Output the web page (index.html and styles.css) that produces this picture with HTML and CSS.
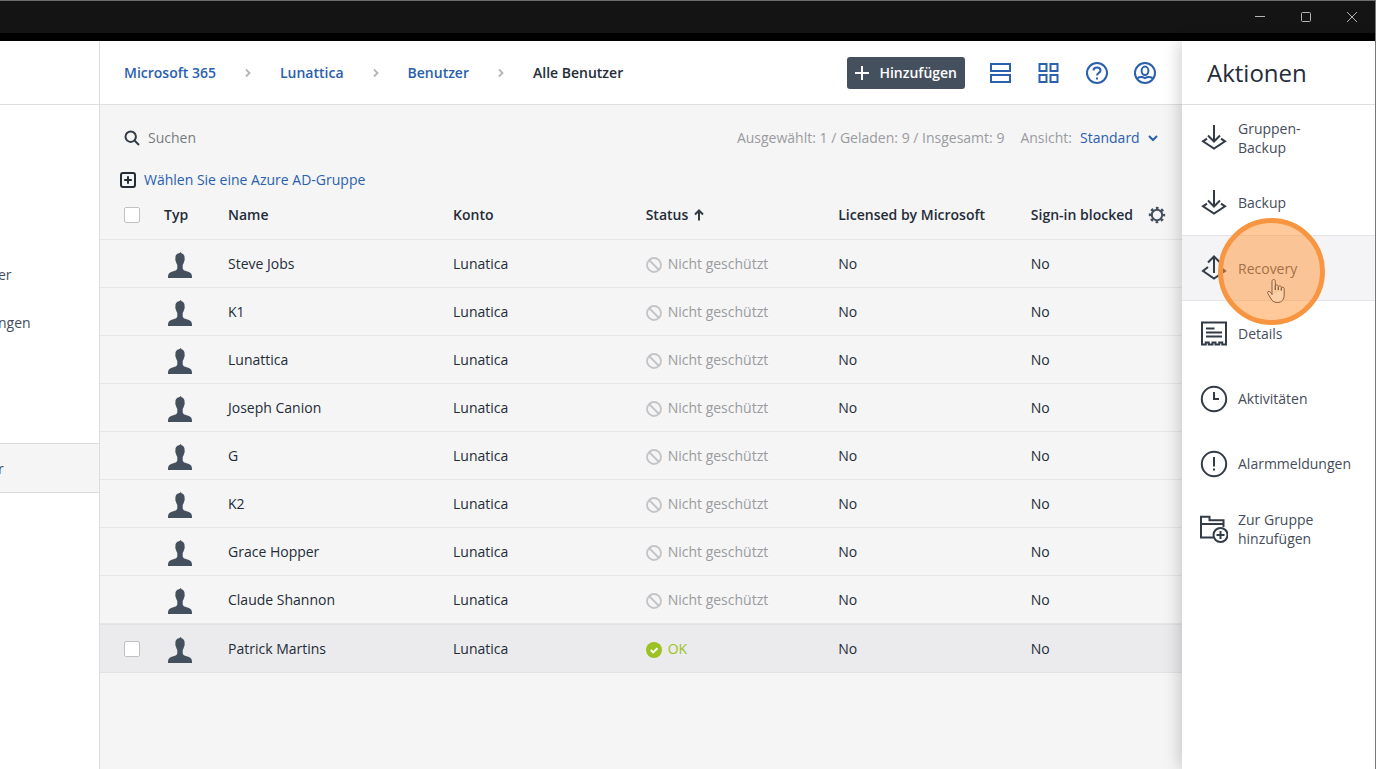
FILE: index.html
```html
<!DOCTYPE html>
<html lang="de">
<head>
    <meta charset="utf-8">
    <meta name="viewport" content="width=device-width, initial-scale=1">
    <title>Alle Benutzer</title>
    <link rel="stylesheet" href="styles.css">
</head>
<body>
    <!-- Shared icons -->
    <svg class="sprite" aria-hidden="true">
        <symbol id="person" viewBox="0 0 24 26">
            <path d="M12.800 0c.3.400.6.800.6 1.300 2.200.5 3.300 2.300 3.200 4.700 0 .8.100 1.300 0 2.200-.1.900-.5 1.200-.7 2-.3 1.200-.7 2.100-1.200 2.800v3.200c.2 1.700 1.600 2.300 4 3 3.300.9 5.300 2.200 5.300 5.300V26H0v-1.500c0-3.100 2-4.400 5.300-5.300 2.400-.7 3.800-1.300 4-3V13c-.5-.7-.9-1.600-1.200-2.800-.2-.8-.6-1.100-.7-2-.1-.9 0-1.400 0-2.200-.1-2.400 1-4.400 3.500-4.800.7-.2 1.400-.6 1.900-1.200z"/>
        </symbol>
        <symbol id="blocked" viewBox="0 0 16 16">
            <path d="M3 3l10 10M15 8A7 7 0 1 1 1 8a7 7 0 0 1 14 0z" fill="none" stroke="currentColor" stroke-width="1.900"/>
        </symbol>
        <symbol id="chevron" viewBox="0 0 8 10">
            <path d="M2 1.500L5.500 5 2 8.500" fill="none" stroke="currentColor" stroke-width="1.800"/>
        </symbol>
        <symbol id="download" viewBox="0 0 28 28">
            <path d="M14 1v16M8 11.500l6 6 6-6M7 14.700L3 17.300 14 24.500l11-7.200-4-2.600" fill="none" stroke="currentColor" stroke-width="2"/>
        </symbol>
    </svg>

    <!-- Window Title Bar -->
    <div class="titlebar">
        <button type="button" aria-label="Minimieren"><svg viewBox="0 0 12 12"><path d="M1 5.500h10"/></svg></button>
        <button type="button" aria-label="Maximieren"><svg viewBox="0 0 12 12"><rect x="1.500" y="1.500" width="9" height="9" rx="1"/></svg></button>
        <button type="button" aria-label="Schließen"><svg viewBox="0 0 12 12"><path d="M1 1l10 10M11 1L1 11"/></svg></button>
    </div>

    <div class="app">
        <!-- Sidebar -->
        <nav class="sidebar">
            <div class="sidebar-header"></div>
            <div class="sidebar-links">
                <a href="#">er</a>
                <a href="#">ngen</a>
                <a href="#" class="active">r</a>
            </div>
        </nav>

        <!-- Main Content -->
        <main class="main">
            <header class="header">
                <nav class="breadcrumb">
                    <a href="#">Microsoft 365</a>
                    <svg><use href="#chevron"/></svg>
                    <a href="#">Lunattica</a>
                    <svg><use href="#chevron"/></svg>
                    <a href="#">Benutzer</a>
                    <svg><use href="#chevron"/></svg>
                    <span>Alle Benutzer</span>
                </nav>
                <div class="header-actions">
                    <button type="button" class="add-button">
                        <svg viewBox="0 0 14 14"><path d="M7 0v14M0 7h14"/></svg>Hinzufügen
                    </button>
                    <button type="button" class="icon-button" aria-label="Listenansicht">
                        <svg viewBox="0 0 24 24"><path d="M2 3h19v7H2zM2 14h19v7H2z"/></svg>
                    </button>
                    <button type="button" class="icon-button" aria-label="Kachelansicht">
                        <svg viewBox="0 0 24 24"><path d="M2.500 3h7v7h-7zM13.500 3h7v7h-7zM2.500 14h7v7h-7zM13.500 14h7v7h-7z"/></svg>
                    </button>
                    <button type="button" class="icon-button" aria-label="Hilfe">
                        <svg viewBox="0 0 24 24"><circle cx="12" cy="12" r="10"/><path d="M8.500 9.500C8.500 7.500 10 6.500 12 6.500s3.500 1.100 3.500 2.900c0 2.500-3.500 2.400-3.500 5.100M12 16.500v2"/></svg>
                    </button>
                    <button type="button" class="icon-button" aria-label="Konto">
                        <svg viewBox="0 0 24 24"><circle cx="12" cy="12" r="10"/><ellipse cx="12" cy="9.800" rx="3.400" ry="4.200"/><path d="M4.500 17c2.500-1.300 5-1.300 7.500.1 2.500-1.400 5-1.400 7.500-.1"/></svg>
                    </button>
                </div>
            </header>

            <div class="toolbar">
                <label class="search">
                    <svg viewBox="0 0 16 16"><circle cx="6.700" cy="6.700" r="5.200"/><path d="M10.500 10.500l4.500 4.500"/></svg>
                    <input type="search" placeholder="Suchen" aria-label="Suchen">
                </label>
                <div class="view">
                    <span>Ausgewählt: 1 / Geladen: 9 / Insgesamt: 9</span>
                    <label for="view">Ansicht:</label>
                    <div class="view-select">
                        <select id="view">
                            <option>Standard</option>
                        </select>
                        <svg viewBox="0 0 10 10"><path d="M1 3l4 4 4-4"/></svg>
                    </div>
                </div>
            </div>

            <a href="#" class="group-link">
                <svg viewBox="0 0 16 16"><rect x="1" y="1" width="14" height="14" rx="2"/><path d="M8 4.200v7.600M4.200 8h7.600"/></svg>
                Wählen Sie eine Azure AD-Gruppe
            </a>

            <!-- Users -->
            <table class="users">
                <thead>
                    <tr>
                        <th class="col-check"><input type="checkbox" aria-label="Alle auswählen"></th>
                        <th class="col-type">Typ</th>
                        <th class="col-name">Name</th>
                        <th class="col-data">Konto</th>
                        <th class="col-data"><div class="sorted">Status <svg viewBox="0 0 10 12"><path d="M5 11.500V1.500M1 5.500l4-4 4 4"/></svg></div></th>
                        <th class="col-data">Licensed by Microsoft</th>
                        <th>
                            <div class="last-head">
                                Sign-in blocked
                                <button type="button" aria-label="Spalten">
                                    <svg viewBox="0 0 18 18"><circle cx="9" cy="9" r="5.200" stroke-width="2"/><circle cx="9" cy="9" r="6.800" stroke-width="2.800" stroke-dasharray="2.600 2.740" stroke-dashoffset="1.300"/></svg>
                                </button>
                            </div>
                        </th>
                    </tr>
                </thead>
                <tbody>
                    <tr>
                        <td></td>
                        <td><svg class="person"><use href="#person"/></svg></td>
                        <td>Steve Jobs</td>
                        <td>Lunatica</td>
                        <td><div class="status"><svg><use href="#blocked"/></svg>Nicht geschützt</div></td>
                        <td>No</td>
                        <td>No</td>
                    </tr>
                    <tr>
                        <td></td>
                        <td><svg class="person"><use href="#person"/></svg></td>
                        <td>K1</td>
                        <td>Lunatica</td>
                        <td><div class="status"><svg><use href="#blocked"/></svg>Nicht geschützt</div></td>
                        <td>No</td>
                        <td>No</td>
                    </tr>
                    <tr>
                        <td></td>
                        <td><svg class="person"><use href="#person"/></svg></td>
                        <td>Lunattica</td>
                        <td>Lunatica</td>
                        <td><div class="status"><svg><use href="#blocked"/></svg>Nicht geschützt</div></td>
                        <td>No</td>
                        <td>No</td>
                    </tr>
                    <tr>
                        <td></td>
                        <td><svg class="person"><use href="#person"/></svg></td>
                        <td>Joseph Canion</td>
                        <td>Lunatica</td>
                        <td><div class="status"><svg><use href="#blocked"/></svg>Nicht geschützt</div></td>
                        <td>No</td>
                        <td>No</td>
                    </tr>
                    <tr>
                        <td></td>
                        <td><svg class="person"><use href="#person"/></svg></td>
                        <td>G</td>
                        <td>Lunatica</td>
                        <td><div class="status"><svg><use href="#blocked"/></svg>Nicht geschützt</div></td>
                        <td>No</td>
                        <td>No</td>
                    </tr>
                    <tr>
                        <td></td>
                        <td><svg class="person"><use href="#person"/></svg></td>
                        <td>K2</td>
                        <td>Lunatica</td>
                        <td><div class="status"><svg><use href="#blocked"/></svg>Nicht geschützt</div></td>
                        <td>No</td>
                        <td>No</td>
                    </tr>
                    <tr>
                        <td></td>
                        <td><svg class="person"><use href="#person"/></svg></td>
                        <td>Grace Hopper</td>
                        <td>Lunatica</td>
                        <td><div class="status"><svg><use href="#blocked"/></svg>Nicht geschützt</div></td>
                        <td>No</td>
                        <td>No</td>
                    </tr>
                    <tr>
                        <td></td>
                        <td><svg class="person"><use href="#person"/></svg></td>
                        <td>Claude Shannon</td>
                        <td>Lunatica</td>
                        <td><div class="status"><svg><use href="#blocked"/></svg>Nicht geschützt</div></td>
                        <td>No</td>
                        <td>No</td>
                    </tr>
                    <tr class="selected">
                        <td><input type="checkbox" aria-label="Patrick Martins auswählen"></td>
                        <td><svg class="person"><use href="#person"/></svg></td>
                        <td>Patrick Martins</td>
                        <td>Lunatica</td>
                        <td><div class="status ok"><svg viewBox="0 0 16 16"><circle cx="8" cy="8" r="8" fill="currentColor"/><path d="M4.800 8l2.400 2.400 4.200-4.200" fill="none" stroke="#fff" stroke-width="2"/></svg>OK</div></td>
                        <td>No</td>
                        <td>No</td>
                    </tr>
                </tbody>
            </table>
        </main>

        <!-- Actions Panel -->
        <aside class="panel">
            <h2>Aktionen</h2>
            <button type="button" class="action">
                <svg><use href="#download"/></svg>
                <span>Gruppen-<br>Backup</span>
            </button>
            <button type="button" class="action">
                <svg><use href="#download"/></svg>
                <span>Backup</span>
            </button>
            <button type="button" class="action active">
                <svg viewBox="0 0 28 28"><path d="M14 19V3M8 8.500l6-6 6 6M8 13l-5 4 11 7.500L25 17l-5-4"/></svg>
                <span>Recovery</span>
                <span class="click-marker">
                    <svg class="hand" viewBox="0 0 20 26"><path d="M6 17V3.500C6 .7 9.300.7 9.300 3.500V12M9.300 12V8.500c0-2 3-2 3 0V12M12.300 12V9.500c0-2 3-2 3 0v3M15.300 12.500v-2c0-1.800 2.900-1.800 2.900.3V17c0 4.500-2.500 7.500-6.700 7.500-3.500 0-5.500-1.500-7-4.500L1.800 15.500c-.9-1.700.9-3 2.200-1.600L6 16"/></svg>
                </span>
            </button>
            <button type="button" class="action">
                <svg viewBox="0 0 28 28"><path d="M2 2.500h24v22h-3.750v-2h-3v2H15.500v-2h-3v2H8.750v-2h-3v2H2zM6 8.500h8.500M6 12.500h16M6 16.500h16"/></svg>
                <span>Details</span>
            </button>
            <button type="button" class="action">
                <svg viewBox="0 0 28 28"><circle cx="14" cy="14" r="12.200"/><path d="M14 7v7h5"/></svg>
                <span>Aktivitäten</span>
            </button>
            <button type="button" class="action">
                <svg viewBox="0 0 28 28"><circle cx="14" cy="14" r="12.200"/><path d="M14 7v9.500M14 18.500v2"/></svg>
                <span>Alarmmeldungen</span>
            </button>
            <button type="button" class="action">
                <svg viewBox="0 0 28 28"><path d="M13.500 22.500H1V1.800h8.500v3.500h14V12M1 9h22.500"/><circle cx="20.500" cy="20" r="7"/><path d="M20.500 16v8M16.500 20h8"/></svg>
                <span>Zur Gruppe<br>hinzufügen</span>
            </button>
        </aside>
    </div>
</body>
</html>
```

FILE: styles.css
```css
/* General Reset */
* {
    margin: 0;
    padding: 0;
    box-sizing: border-box;
}

body {
    font-family: 'Open Sans', sans-serif;
    font-size: 14px;
    line-height: 19px;
    color: #242c38;
    background: #fff;
    min-height: 100vh;
    display: flex;
    flex-direction: column;
    border-top: 1px solid #6b6d6c;
    border-right: 1px solid #77787a;
    overflow: hidden;
}

button,
input,
select {
    font: inherit;
    color: inherit;
    background: none;
    border: none;
}

button {
    cursor: pointer;
}

a {
    color: #2a60ae;
    text-decoration: none;
}

svg {
    display: block;
    flex-shrink: 0;
}

.sprite {
    display: none;
}

/* Title Bar */
.titlebar {
    display: flex;
    justify-content: flex-end;
    height: 40px;
    background: #141414;
    border-bottom: 8px solid #000;
}

.titlebar button {
    display: flex;
    align-items: center;
    justify-content: center;
    width: 46px;
}

.titlebar svg {
    width: 12px;
    height: 12px;
    fill: none;
    stroke: #b4b4b4;
}

.app {
    display: flex;
    flex: 1;
}

/* Sidebar */
.sidebar {
    width: 100px;
    flex-shrink: 0;
    border-right: 1px solid #dcdcde;
}

.sidebar-header {
    height: 64px;
    border-bottom: 1px solid #dfdfdf;
}

.sidebar-links {
    padding-top: 145px;
}

.sidebar-links a {
    display: flex;
    align-items: center;
    height: 48px;
    color: #454d5a;
    text-indent: -2px;
}

.sidebar-links .active {
    height: 50px;
    margin-top: 97px;
    background: #f5f5f5;
    border-top: 1px solid #dcdcde;
    border-bottom: 1px solid #dcdcde;
}

/* Main Content */
.main {
    flex: 1;
    min-width: 0;
    background: #f5f5f5;
}

.header {
    display: flex;
    align-items: center;
    justify-content: space-between;
    height: 64px;
    padding: 0 25px 0 24px;
    background: #fff;
    border-bottom: 1px solid #dfdfdf;
}

.breadcrumb {
    display: flex;
    align-items: center;
    gap: 28px;
    font-weight: 600;
}

.breadcrumb svg {
    width: 8px;
    height: 10px;
    color: #b3b6ba;
}

.header-actions {
    display: flex;
    align-items: center;
    gap: 24px;
}

.add-button {
    display: flex;
    align-items: center;
    gap: 10px;
    height: 32px;
    padding: 0 8px;
    border-radius: 3px;
    background: #45505e;
    color: #fff;
    font-weight: 600;
}

.add-button svg {
    width: 14px;
    height: 14px;
    stroke: #fff;
    stroke-width: 2;
}

.icon-button svg {
    width: 24px;
    height: 24px;
    fill: none;
    stroke: #2a60ae;
    stroke-width: 2;
}

/* Toolbar */
.toolbar {
    display: flex;
    align-items: center;
    justify-content: space-between;
    padding: 23px 24px 0;
}

.search {
    display: flex;
    align-items: center;
    gap: 8px;
}

.search svg {
    width: 16px;
    height: 16px;
    fill: none;
    stroke: #333b47;
    stroke-width: 2;
}

.search input {
    outline: none;
}

.search input::placeholder {
    color: #777b80;
}

.view {
    display: flex;
    align-items: center;
    gap: 16px;
    color: #999b9f;
}

.view-select {
    display: flex;
    align-items: center;
    gap: 8px;
    margin-left: -8px;
    color: #2a60ae;
}

.view-select select {
    appearance: none;
}

.view-select svg {
    width: 10px;
    height: 10px;
    fill: none;
    stroke: #2a60ae;
    stroke-width: 2;
}

.group-link {
    display: flex;
    align-items: center;
    gap: 8px;
    padding: 23px 20px 1px;
}

.group-link svg {
    width: 16px;
    height: 16px;
    fill: none;
    stroke: #242c38;
    stroke-width: 2;
}

/* Users Table */
.users {
    width: 100%;
    table-layout: fixed;
    border-collapse: separate;
    border-spacing: 0;
}

.users th,
.users td {
    height: 48px;
    text-align: left;
    vertical-align: middle;
    border-bottom: 1px solid #e6e6e8;
    white-space: nowrap;
}

.users th {
    height: 50px;
    font-weight: 600;
}

.users .col-check,
.users .col-type {
    width: 64px;
}

.users .col-name {
    width: 20.8%;
}

.users .col-data {
    width: 17.8%;
}

.users th:first-child,
.users td:first-child {
    padding-left: 24px;
}

.users input {
    appearance: none;
    display: block;
    width: 16px;
    height: 16px;
    background: #fff;
    border: 1px solid #bfc1c4;
    border-radius: 2px;
}

.users input:checked {
    background: #2a60ae;
}

.sorted {
    display: flex;
    align-items: center;
    gap: 6px;
}

.sorted svg {
    width: 10px;
    height: 12px;
    fill: none;
    stroke: #333b47;
    stroke-width: 2;
}

.last-head {
    display: flex;
    align-items: center;
    justify-content: space-between;
    padding-right: 16px;
}

.last-head svg {
    width: 18px;
    height: 18px;
    fill: none;
    stroke: #45505e;
}

.person {
    width: 24px;
    height: 26px;
    margin: 2px 0 0 4px;
    fill: #45505e;
}

.status {
    display: flex;
    align-items: center;
    gap: 6px;
    color: #999b9f;
}

.status svg {
    width: 16px;
    height: 16px;
    margin-top: 2px;
    color: #c3c5c8;
}

.status.ok,
.status.ok svg {
    color: #9bc222;
}

.users .selected td {
    height: 49px;
    background: #ebebed;
    border-top: 1px solid #e2e2e4;
    border-bottom-color: #e2e2e4;
}

/* Actions Panel */
.panel {
    position: relative;
    width: 193px;
    flex-shrink: 0;
    background: #fff;
    box-shadow: -2px 0 16px rgba(0, 0, 0, 0.2);
}

.panel h2 {
    height: 64px;
    padding-left: 25px;
    border-bottom: 1px solid #dfdfdf;
    font-size: 24px;
    font-weight: 400;
    line-height: 64px;
}

.action {
    position: relative;
    display: flex;
    align-items: center;
    gap: 10px;
    width: 100%;
    height: 65px;
    padding-left: 18px;
    color: #454d5a;
    text-align: left;
}

.action.active {
    height: 66px;
    background: #f4f4f6;
    border-top: 1px solid #e4e4e6;
    border-bottom: 1px solid #e4e4e6;
}

.action svg {
    width: 28px;
    height: 28px;
    fill: none;
    stroke: #333b47;
    stroke-width: 2;
    color: #333b47;
}

/* Click highlight over the active action */
.click-marker {
    position: absolute;
    top: -18px;
    left: 36px;
    z-index: 1;
    width: 107px;
    height: 107px;
    border: 5px solid #f89540;
    border-radius: 50%;
    background: rgba(255, 148, 54, 0.5);
}

.action .hand {
    position: absolute;
    top: 55px;
    left: 43px;
    width: 20px;
    height: 26px;
    fill: #fcd0a8;
    stroke: #8d5d38;
    stroke-width: 1;
}
```
